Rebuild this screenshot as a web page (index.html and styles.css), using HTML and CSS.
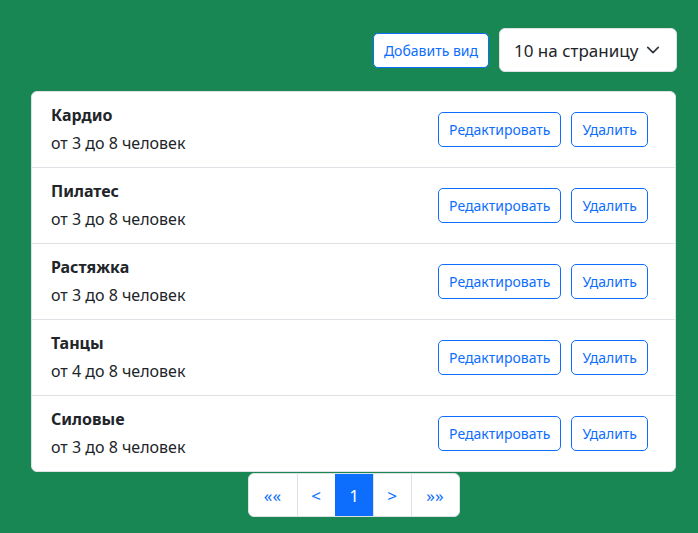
FILE: index.html
```html
<!DOCTYPE html>
<html lang="ru">
<head>
<meta charset="utf-8">
<title>Виды</title>
<link rel="stylesheet" href="styles.css">
</head>
<body>
<div class="page">
  <div class="toolbar">
    <button class="btn btn-add">Добавить вид</button>
    <div class="select">
      <span>10 на страницу</span>
      <svg class="chev" width="14" height="14" viewBox="0 0 16 16"><path d="M2 5l6 6 6-6" fill="none" stroke="#343a40" stroke-width="2" stroke-linecap="round" stroke-linejoin="round"/></svg>
    </div>
  </div>
  <ul class="list">
    <li class="item">
      <div class="info"><div class="title">Кардио</div><div class="sub">от 3 до 8 человек</div></div>
      <div class="actions"><button class="btn">Редактировать</button><button class="btn">Удалить</button></div>
    </li>
    <li class="item">
      <div class="info"><div class="title">Пилатес</div><div class="sub">от 3 до 8 человек</div></div>
      <div class="actions"><button class="btn">Редактировать</button><button class="btn">Удалить</button></div>
    </li>
    <li class="item">
      <div class="info"><div class="title">Растяжка</div><div class="sub">от 3 до 8 человек</div></div>
      <div class="actions"><button class="btn">Редактировать</button><button class="btn">Удалить</button></div>
    </li>
    <li class="item">
      <div class="info"><div class="title">Танцы</div><div class="sub">от 4 до 8 человек</div></div>
      <div class="actions"><button class="btn">Редактировать</button><button class="btn">Удалить</button></div>
    </li>
    <li class="item">
      <div class="info"><div class="title">Силовые</div><div class="sub">от 3 до 8 человек</div></div>
      <div class="actions"><button class="btn">Редактировать</button><button class="btn">Удалить</button></div>
    </li>
  </ul>
  <nav class="pager">
    <span class="pg pg-wide">««</span>
    <span class="pg">&lt;</span>
    <span class="pg active">1</span>
    <span class="pg">&gt;</span>
    <span class="pg pg-wide">»»</span>
  </nav>
</div>
</body>
</html>
```
FILE: styles.css
```css
* { box-sizing: border-box; }
html, body { margin: 0; padding: 0; }
body {
  background: #198754;
  font-family: "Noto Sans", "Open Sans", sans-serif;
  color: #212529;
  width: 698px;
  height: 533px;
  overflow: hidden;
}
.page {
  padding: 28px 22px 0 31px;
  display: flex;
  flex-direction: column;
}
.toolbar {
  display: flex;
  justify-content: flex-end;
  align-items: center;
  gap: 10px;
  margin-right: -1px;
  margin-bottom: 19px;
}
.btn {
  font-family: inherit;
  font-size: 14px;
  line-height: 21px;
  padding: 6px 10px;
  height: 35px;
  color: #0d6efd;
  background: #fff;
  border: 1px solid #0d6efd;
  border-radius: 5px;
  white-space: nowrap;
}
.select {
  width: 178px;
  height: 44px;
  background: #fff;
  border: 1px solid #dee2e6;
  border-radius: 6px;
  display: flex;
  align-items: center;
  justify-content: space-between;
  padding: 0 16px 0 14px;
  font-size: 17px;
}
.chev { display: block; }
.list {
  list-style: none;
  margin: 0;
  padding: 0;
  background: #fff;
  border-radius: 6px;
  border: 1px solid #dee2e6;
}
.item {
  height: 76px;
  display: flex;
  align-items: center;
  justify-content: space-between;
  padding: 0 27px 0 19px;
  border-bottom: 1px solid #dee2e6;
}
.item:last-child { border-bottom: 0; height: 75px; }
.info { display: flex; flex-direction: column; gap: 4px; margin-top: -1px; }
.title { font-weight: 700; font-size: 16px; line-height: 24px; }
.sub { font-size: 16px; line-height: 24px; }
.actions { display: flex; gap: 10px; }
.pager {
  align-self: center;
  display: flex;
  height: 44px;
  margin-top: 1px;
  background: #fff;
  border: 1px solid #dee2e6;
  border-radius: 6px;
  overflow: hidden;
}
.pg {
  display: flex;
  align-items: center;
  justify-content: center;
  width: 38px;
  font-size: 17px;
  color: #0d6efd;
  border-left: 1px solid #dee2e6;
}
.pg:first-child { border-left: 0; }
.pg-wide { width: 48px; }
.active { background: #0d6efd; color: #fff; border-color: #0d6efd; }
```
